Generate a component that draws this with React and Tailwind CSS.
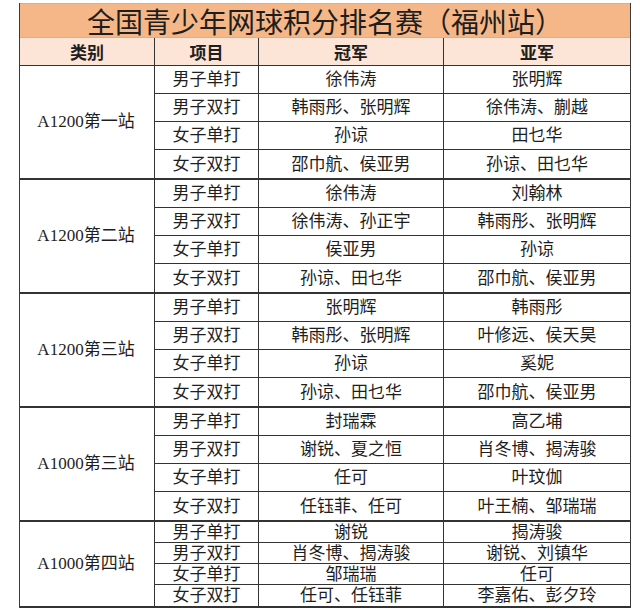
import React from "react";

const groups = [
  {
    name: "A1200第一站",
    rows: [
      ["男子单打", "徐伟涛", "张明辉"],
      ["男子双打", "韩雨彤、张明辉", "徐伟涛、蒯越"],
      ["女子单打", "孙谅", "田乜华"],
      ["女子双打", "邵巾航、侯亚男", "孙谅、田乜华"],
    ],
  },
  {
    name: "A1200第二站",
    rows: [
      ["男子单打", "徐伟涛", "刘翰林"],
      ["男子双打", "徐伟涛、孙正宇", "韩雨彤、张明辉"],
      ["女子单打", "侯亚男", "孙谅"],
      ["女子双打", "孙谅、田乜华", "邵巾航、侯亚男"],
    ],
  },
  {
    name: "A1200第三站",
    rows: [
      ["男子单打", "张明辉", "韩雨彤"],
      ["男子双打", "韩雨彤、张明辉", "叶修远、侯天昊"],
      ["女子单打", "孙谅", "奚妮"],
      ["女子双打", "孙谅、田乜华", "邵巾航、侯亚男"],
    ],
  },
  {
    name: "A1000第三站",
    rows: [
      ["男子单打", "封瑞霖", "高乙埔"],
      ["男子双打", "谢锐、夏之恒", "肖冬博、揭涛骏"],
      ["女子单打", "任可", "叶玟伽"],
      ["女子双打", "任钰菲、任可", "叶王楠、邹瑞瑞"],
    ],
  },
  {
    name: "A1000第四站",
    small: true,
    rows: [
      ["男子单打", "谢锐", "揭涛骏"],
      ["男子双打", "肖冬博、揭涛骏", "谢锐、刘镇华"],
      ["女子单打", "邹瑞瑞", "任可"],
      ["女子双打", "任可、任钰菲", "李嘉佑、彭夕玲"],
    ],
  },
];

export default function App() {
  return (
    <div
      className="w-[640px] h-[608px] overflow-hidden bg-white text-[#1e1e1e]"
      style={{ fontFamily: '"Liberation Serif", "Noto Sans CJK SC", serif' }}
    >
      <div className="ml-[19px] mt-[3px] w-[612px] border-l border-r border-[#3a3a3a]">
        <div
          className="h-[35px] bg-[#F5B787] border-t border-[#b8b8b8] border-b border-[#333] flex items-center justify-center text-[28px] leading-none"
          style={{ fontFamily: '"Noto Sans CJK SC", sans-serif' }}
        >
          全国青少年网球积分排名赛（福州站）
        </div>
        <div
          className="h-[28px] bg-[#FCE4D6] grid grid-cols-[135px_104px_185px_186px] border-b border-[#333] text-[17px] font-bold leading-none"
          style={{ fontFamily: '"Noto Sans CJK SC", sans-serif' }}
        >
          <div className="flex items-center justify-center border-r border-[#333]">类别</div>
          <div className="flex items-center justify-center border-r border-[#333]">项目</div>
          <div className="flex items-center justify-center border-r border-[#333]">冠军</div>
          <div className="flex items-center justify-center">亚军</div>
        </div>
        {groups.map((g) => (
          <div key={g.name} className="flex border-b-2 border-[#333]">
            <div className="w-[135px] shrink-0 border-r border-[#333] flex items-center justify-center text-[17px] pr-[2px]">
              {g.name}
            </div>
            <div className="flex-1 flex flex-col">
              {g.rows.map((r, i) => (
                <div
                  key={i}
                  className={
                    "grid grid-cols-[104px_185px_186px] text-[17px] leading-none " +
                    (g.small ? "h-[21px] " : "h-[28px] ") +
                    (i < 3 ? "border-b border-[#333]" : "")
                  }
                >
                  <div className="flex items-center justify-center border-r border-[#333]">{r[0]}</div>
                  <div className="flex items-center justify-center border-r border-[#333]">{r[1]}</div>
                  <div className="flex items-center justify-center">{r[2]}</div>
                </div>
              ))}
            </div>
          </div>
        ))}
      </div>
      <div
        className="mt-[2px] pl-[22px] text-[24px] font-bold leading-none tracking-[14px] text-black"
        style={{ fontFamily: '"Noto Sans CJK SC", sans-serif' }}
      >
        在本次比赛中福建选手表现出色
      </div>
    </div>
  );
}
